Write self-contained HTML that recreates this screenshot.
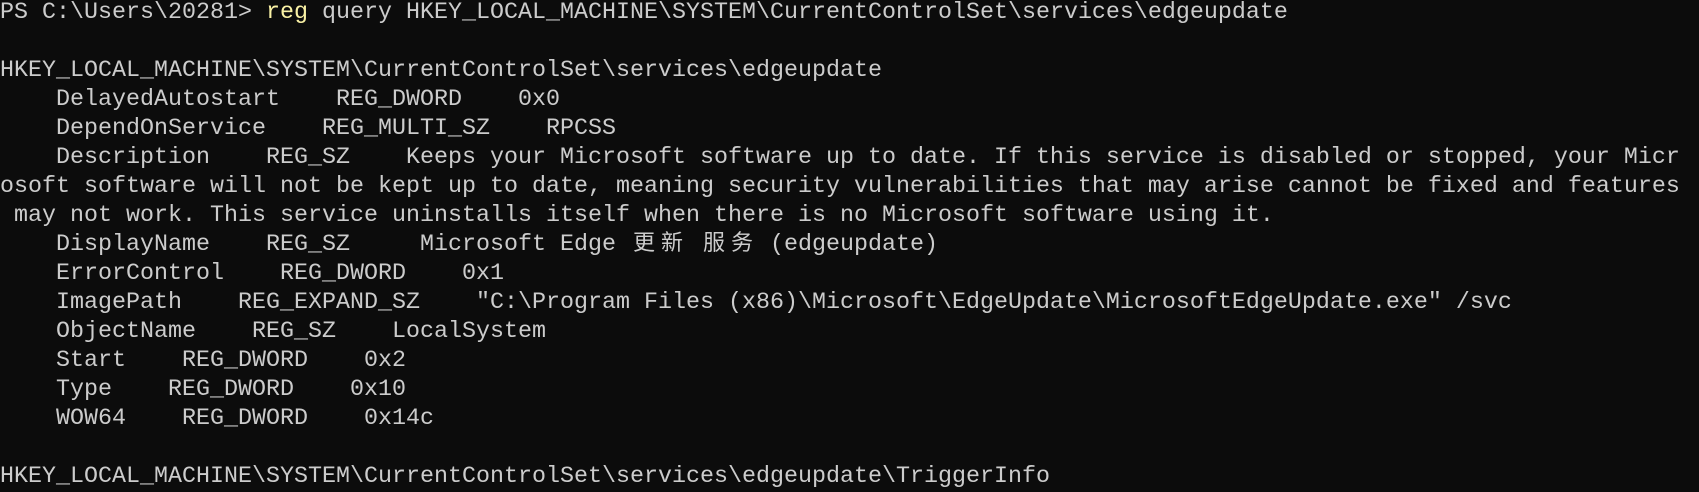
<!DOCTYPE html>
<html><head><meta charset="utf-8"><style>
html,body{margin:0;padding:0;background:#0c0c0c;width:1699px;height:491px;overflow:hidden}
pre{margin:0;position:absolute;left:0;top:-1px;font-family:"Liberation Mono",monospace;font-size:23.33px;line-height:29px;color:#cccccc;white-space:pre;letter-spacing:0}
.y{color:#f9f1a5}
.c{display:inline-block;width:28px;text-align:center;font-family:"Noto Sans CJK SC",sans-serif;font-size:22px;line-height:0;height:0;vertical-align:baseline}
</style></head><body>
<pre>PS C:\Users\20281&gt; <span class="y">reg</span> query HKEY_LOCAL_MACHINE\SYSTEM\CurrentControlSet\services\edgeupdate

HKEY_LOCAL_MACHINE\SYSTEM\CurrentControlSet\services\edgeupdate
    DelayedAutostart    REG_DWORD    0x0
    DependOnService    REG_MULTI_SZ    RPCSS
    Description    REG_SZ    Keeps your Microsoft software up to date. If this service is disabled or stopped, your Micr
osoft software will not be kept up to date, meaning security vulnerabilities that may arise cannot be fixed and features
 may not work. This service uninstalls itself when there is no Microsoft software using it.
    DisplayName    REG_SZ     Microsoft Edge <span class="c">更</span><span class="c">新</span> <span class="c">服</span><span class="c">务</span> (edgeupdate)
    ErrorControl    REG_DWORD    0x1
    ImagePath    REG_EXPAND_SZ    "C:\Program Files (x86)\Microsoft\EdgeUpdate\MicrosoftEdgeUpdate.exe" /svc
    ObjectName    REG_SZ    LocalSystem
    Start    REG_DWORD    0x2
    Type    REG_DWORD    0x10
    WOW64    REG_DWORD    0x14c

HKEY_LOCAL_MACHINE\SYSTEM\CurrentControlSet\services\edgeupdate\TriggerInfo</pre>
</body></html>
